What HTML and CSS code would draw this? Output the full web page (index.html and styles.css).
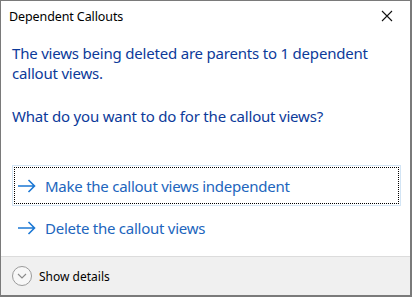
FILE: index.html
```html
<!DOCTYPE html>
<html lang="en">
<head>
    <meta charset="UTF-8">
    <title>Dependent Callouts</title>
    <link rel="stylesheet" href="styles.css">
</head>
<body>
    <div class="dialog">
        <div class="titlebar">
            <span class="title">Dependent Callouts</span>
            <button class="close" aria-label="Close">
                <svg width="12" height="12" viewBox="0 0 12 12">
                    <path d="M1 1 L11 11 M11 1 L1 11" stroke="#111" stroke-width="1.1" fill="none"/>
                </svg>
            </button>
        </div>
        <div class="content">
            <p class="main-text">The views being deleted are parents to 1 dependent callout views.</p>
            <p class="main-text question">What do you want to do for the callout views?</p>
            <div class="commands">
                <button class="command focused">
                    <span class="focus-ring">
                        <svg class="arrow" width="18" height="14" viewBox="0 0 18 14">
                            <path d="M0 7 H16.5 M10.5 1 L16.5 7 L10.5 13" stroke="#1c78d4" stroke-width="1.6" fill="none"/>
                        </svg>
                        <span>Make the callout views independent</span>
                    </span>
                </button>
                <button class="command">
                    <span class="focus-ring">
                        <svg class="arrow" width="18" height="14" viewBox="0 0 18 14">
                            <path d="M0 7 H16.5 M10.5 1 L16.5 7 L10.5 13" stroke="#1c78d4" stroke-width="1.6" fill="none"/>
                        </svg>
                        <span>Delete the callout views</span>
                    </span>
                </button>
            </div>
        </div>
        <div class="footer">
            <span class="expander">
                <svg width="10" height="6" viewBox="0 0 10 6">
                    <path d="M1 1 L5 5 L9 1" stroke="#8a8a8a" stroke-width="1.1" fill="none"/>
                </svg>
            </span>
            <span>Show details</span>
        </div>
    </div>
</body>
</html>
```

FILE: styles.css
```css
body {
    margin: 0;
    font-family: "Noto Sans", "Open Sans", sans-serif;
    background: #ffffff;
}

.dialog {
    width: 412px;
    height: 297px;
    box-sizing: border-box;
    border: 1px solid #7a7a7a;
    border-right-width: 2px;
    border-bottom-width: 2px;
    display: flex;
    flex-direction: column;
    background: #ffffff;
}

.titlebar {
    height: 30px;
    display: flex;
    align-items: center;
    justify-content: space-between;
    padding-left: 8px;
}

.title {
    font-size: 12.5px;
    color: #000000;
    letter-spacing: -0.1px;
}

.close {
    width: 46px;
    height: 30px;
    border: none;
    background: none;
    padding: 0;
    display: flex;
    align-items: center;
    justify-content: center;
}

.content {
    flex: 1;
    padding: 12px 9px 0 11px;
}

.main-text {
    margin: 0;
    font-size: 15px;
    line-height: 20px;
    color: #0c3a9a;
    letter-spacing: -0.2px;
}

.question {
    margin-top: 23px;
}

.commands {
    margin-top: 39px;
    display: flex;
    flex-direction: column;
    gap: 1px;
}

.command {
    height: 41px;
    border: 1px solid transparent;
    background: none;
    padding: 1px;
    text-align: left;
    font-family: inherit;
    font-size: 15px;
    color: #2165bd;
    cursor: pointer;
}

.command.focused {
    border-color: #d3e5f5;
}

.focus-ring {
    height: 100%;
    box-sizing: border-box;
    display: flex;
    align-items: center;
    gap: 9px;
    padding-left: 3px;
    border: 1px dotted transparent;
    letter-spacing: -0.25px;
}

.command.focused .focus-ring {
    border-color: #000000;
}

.footer {
    height: 38px;
    background: #f0f0f0;
    border-top: 1px solid #dcdcdc;
    display: flex;
    align-items: center;
    gap: 7px;
    padding-left: 11px;
    font-size: 12px;
    color: #000000;
}

.expander {
    width: 18px;
    height: 18px;
    border: 1px solid #9a9a9a;
    border-radius: 50%;
    display: flex;
    align-items: center;
    justify-content: center;
    background: #f7f7f7;
}
```
